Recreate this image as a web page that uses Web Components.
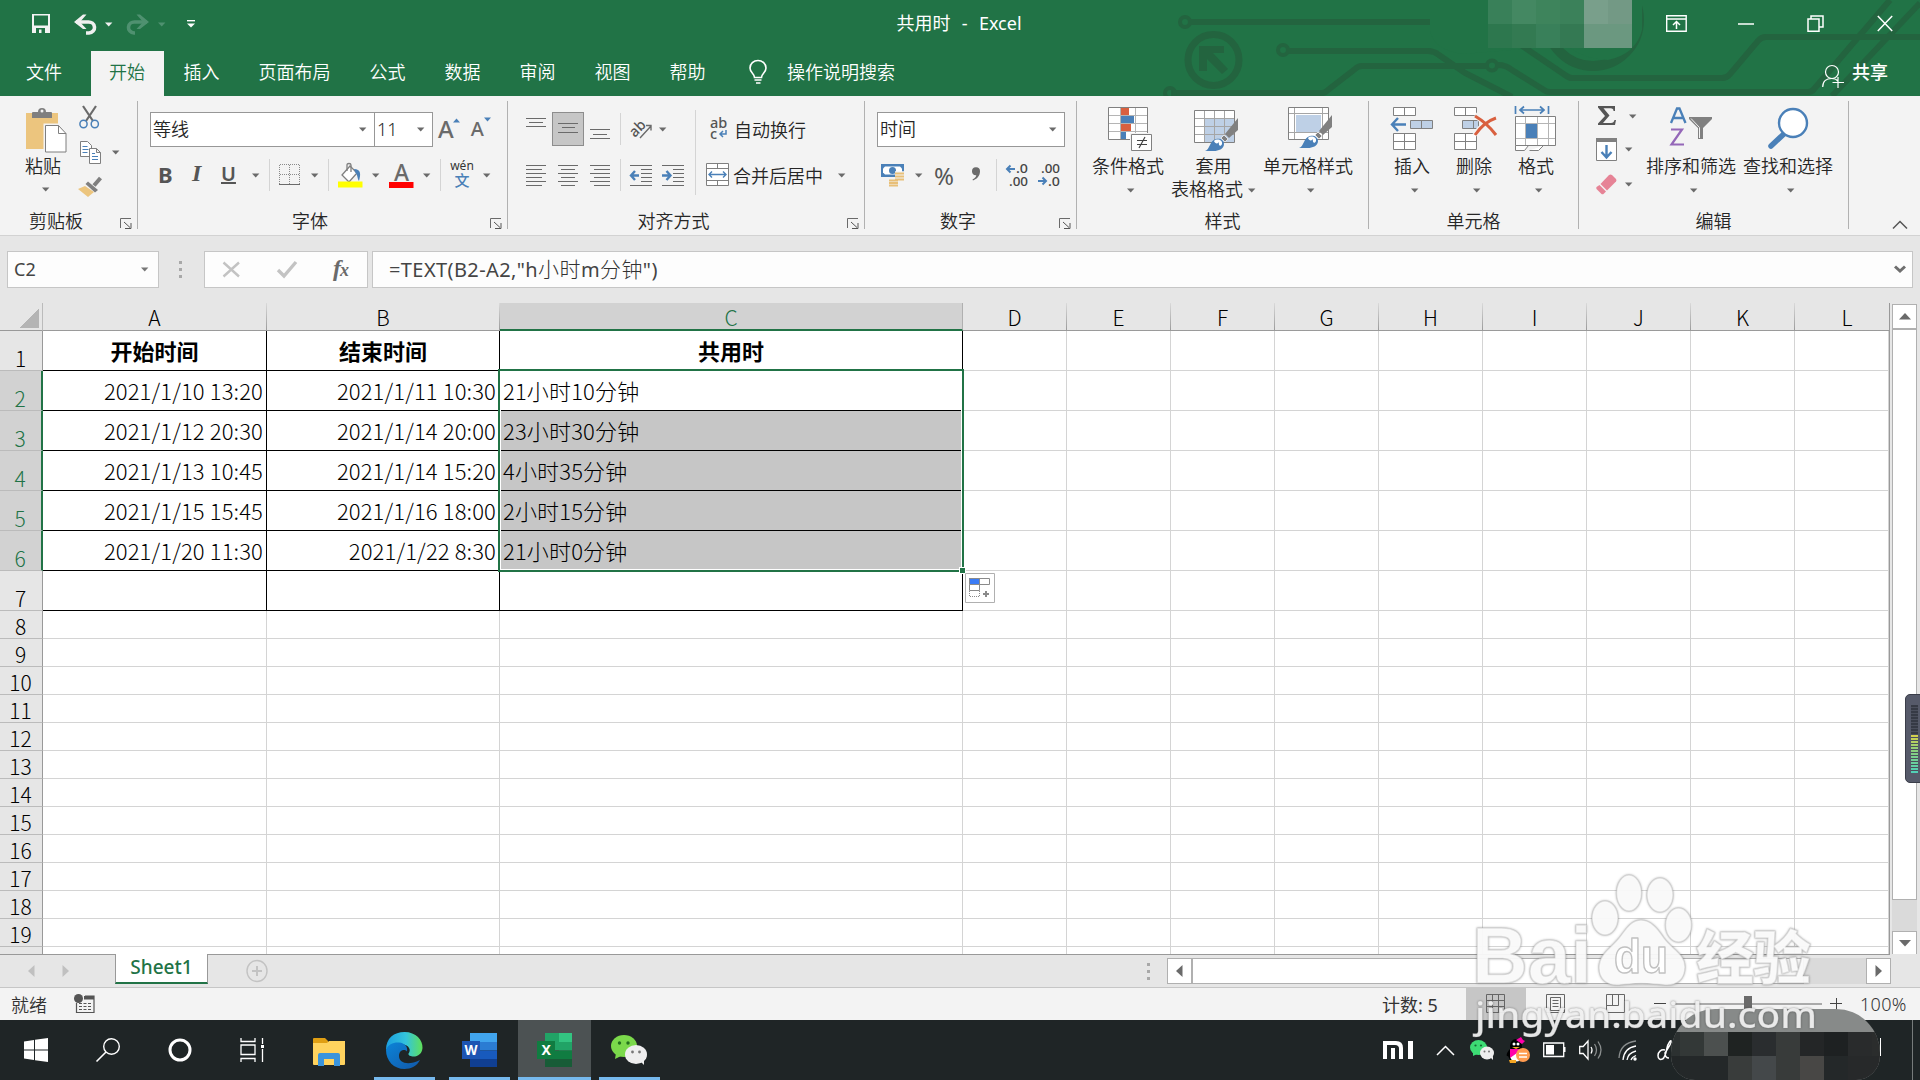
<!DOCTYPE html>
<html lang="zh-CN">
<head>
<meta charset="utf-8">
<title>共用时 - Excel</title>
<style>
    html, body {
        margin: 0;
        width: 1920px;
        height: 1080px;
        overflow: hidden;
        background: #e6e6e6;
        font-family: "Noto Sans", "Noto Sans CJK SC", sans-serif;
        font-size: 18px;
        font-weight: 350;
        color: #262626;
    }
</style>
</head>
<body>
<excel-window></excel-window>

<script>
// small drawings, [width, height, svg content]
const G = '#6a6a6a', B = '#4a80b8', R = '#d9603f', L = '#bed0e6'
const lines = (list, c = G) => list.map(([x1, x2, y]) => `<path d="M${x1} ${y}.5H${x2}" stroke="${c}"/>`).join('')
const brush = `<path d="M44 9V21L35 29 31 25Z" fill="#808080"/><path d="M30 26l4 4-3 3-4-4z" fill="#808080" stroke="#f3f3f3" stroke-width=".8"/>
    <path d="M11 42C16 41 15 32 22 30c4-1 8 1 8 5 0 5-6 7-10 7z" fill="${B}"/><path d="M20 32c3-3 9-1 8 3-1 3-4 2-3-2-1 2-4 2-5-1z" fill="#fff"/>`
const ICONS = {
    caret: [8, 5, '<path d="M0 .5H7.4L3.7 4.5Z" fill="currentColor"/>'],
    save: [20, 20, '<path d="M1 0h18v19H1z" fill="#f3f3f3"/><path d="M3 1.500h14v10H3z" fill="#217346"/><path d="M5 14h9v5H5z" fill="#217346"/><path d="M8 15.500h2.500V19H8z" fill="#f3f3f3"/>'],
    undo: [24, 21, '<path d="M2 8h12a6 5.500 0 0 1 1 11h-3" fill="none" stroke="currentColor" stroke-width="3.600"/><path d="M0 8 9 .5h3.500L6 8l6.500 7H9z" fill="currentColor"/>'],
    redo: [24, 21, '<path d="M22 8H10a6 5.500 0 0 0-1 11h1" fill="none" stroke="currentColor" stroke-width="3.600"/><path d="M24 8 15 .5h-3.500L18 8l-6.500 7H15z" fill="currentColor"/>'],
    more: [8, 8, '<path d="M0 .7h8" stroke="#fff" stroke-width="1.400"/><path d="M0 3.500h8L4 7.500z" fill="#fff"/>'],
    ribbonopt: [21, 17, '<path d="M.7.7h19.500v15.500H.7zM1 4h19" fill="none" stroke="#fff" stroke-width="1.400"/><path d="M10.500 14V7M7 10l3.500-3.500L14 10" fill="none" stroke="#fff" stroke-width="1.500"/>'],
    min: [16, 17, '<path d="M0 9h16" stroke="#fff" stroke-width="1.500"/>'],
    restore: [17, 17, '<path d="M1 4h11v12.200H1zM4 4V1h12v11h-3.500" fill="none" stroke="#fff" stroke-width="1.500"/>'],
    close: [16, 17, '<path d="M.8 1l14.400 15M15.200 1 .8 16" stroke="#fff" stroke-width="1.500"/>'],
    bulb: [18, 24, '<path d="M5.500 17.500c0-4-4.500-4.500-4.500-9.500a8 7.500 0 0 1 16 0c0 5-4.500 5.500-4.500 9.500zM5.500 20h7M7 23h4.500" fill="none" stroke="#fff" stroke-width="1.600"/>'],
    share: [22, 24, '<ellipse cx="10" cy="7" rx="6.500" ry="6.500" fill="none" stroke="#fff" stroke-width="1.200"/><path d="M.7 22c0-6 4-8.500 9-8.500 3 0 5 1 6 2.500M16 12v11M10.500 17.500H22" fill="none" stroke="#fff" stroke-width="1.200"/>'],
    paste: [42, 46, '<path d="M1 6h32v36H1z" fill="#ecc57e"/><path d="M7 11V6q0-1 1-1h5a4 4 0 0 1 8 0h5q1 0 1 1v5z" fill="#7f7f7f"/><circle cx="17" cy="4" r="1.500" fill="#f3f3f3"/><path d="M20 18h14l7.500 8v19H20z" fill="#fff" stroke="#f3f3f3" stroke-width="3"/><path d="M20.500 18.500h13l7.500 8v18.500H20.500zM33.500 18.500v8H41" fill="#fff" stroke="#7f7f7f"/>'],
    cut: [21, 23, `<path d="M4 0l10 15M17 0 7 15" stroke="#6a6a6a" stroke-width="2.200"/><ellipse cx="4.500" cy="18" rx="3.600" ry="3.800" fill="none" stroke="${B}" stroke-width="1.500"/><ellipse cx="15.800" cy="18" rx="3.600" ry="3.800" fill="none" stroke="${B}" stroke-width="1.500"/>`],
    copy: [21, 23, `<path d="M.5.5h7l4 4v11H.5z" fill="#fff" stroke="#7f7f7f"/><path d="M2.500 5.500h5M2.500 8.500h6M2.500 11.500h5" stroke="${B}"/><path d="M9.500 7.500h7l4 4v11h-11zM16.500 7.500v4h4" fill="#fff" stroke="#7f7f7f"/><path d="M12 12.500h3M12 15.500h6M12 18.500h6" stroke="${B}"/>`],
    painter: [24, 21, '<path d="M22.500 1 16 8.500" stroke="#7f7f7f" stroke-width="4"/><path d="M10 4.500 20 13l-3 2.500L7.500 7z" fill="#7f7f7f"/><path d="M7 9 0 12l10 8 6-5z" fill="#ecc57e"/>'],
    borders: [22, 22, '<path d="M.5 1v19M10.500 1v19M20.500 1v19M1 .5h20M1 10.500h20" stroke="#8a8a8a" stroke-dasharray="1 1"/><path d="M0 20.500h21" stroke="#6a6a6a"/>'],
    fill: [25, 25, `<path d="M12 3 4 12l7 7 8-9z" fill="#fff" stroke="#7f7f7f" stroke-width="1.300"/><path d="M9 8V2q0-1.500 2-1.500T13 2v7" fill="none" stroke="#7f7f7f" stroke-width="1.300"/><path d="M16 6c7 0 7 5 5 12-2-3-1-6-4-9z" fill="${B}"/><path d="M0 18.500h24.500v6H0z" fill="#ff0"/>`],
    fontred: [25, 6, '<path d="M0 0h24.500v6H0z" fill="red"/>'],
    up: [7, 5, `<path d="M0 4.500 3.500.5 7 4.500Z" fill="${B}"/>`],
    down: [7, 5, `<path d="M0 .5 3.500 4.500 7 .5Z" fill="${B}"/>`],
    launch: [12, 11, '<path d="M.5 10V.5H11" fill="none" stroke="#6a6a6a"/><path d="M4 4l6 5.500M11 5v5.500H5" fill="none" stroke="#555"/>'],
    top: [20, 34, lines([[0, 20, 6], [3, 17, 10], [0, 20, 14]])],
    mid: [20, 34, lines([[0, 20, 11], [4, 17, 15], [0, 20, 20]])],
    bot: [20, 34, lines([[0, 20, 17], [3, 17, 22], [0, 20, 26]])],
    left: [20, 23, lines([[0, 20, 1], [0, 16, 5], [0, 20, 9], [0, 16, 13], [0, 20, 17], [0, 16, 21]])],
    center: [20, 23, lines([[0, 20, 1], [3, 17, 5], [0, 20, 9], [3, 17, 13], [0, 20, 17], [3, 17, 21]])],
    right: [20, 23, lines([[0, 20, 1], [4, 20, 5], [0, 20, 9], [4, 20, 13], [0, 20, 17], [4, 20, 21]])],
    outdent: [23, 23, lines([[0, 22, 1], [11, 22, 5], [11, 22, 9], [11, 22, 13], [11, 22, 17], [0, 22, 21]]) + `<path d="M1 11.500h8M5 7l-4 4.500L5 16" fill="none" stroke="${B}" stroke-width="2.400"/>`],
    indent: [23, 23, lines([[0, 22, 1], [11, 22, 5], [11, 22, 9], [11, 22, 13], [11, 22, 17], [0, 22, 21]]) + `<path d="M0 11.500h8M4.500 7l4 4.500-4 4.500" fill="none" stroke="${B}" stroke-width="2.400"/>`],
    orient: [22, 20, '<text x="-2" y="13" transform="rotate(-45 8 9)" font-size="14.500" font-weight="500" fill="#555" font-family="Noto Sans">ab</text><path d="M9 19 20 7M15 6.500h5v5" fill="none" stroke="#6a6a6a" stroke-width="1.400"/>'],
    wrap: [18, 22, `<text x="0" y="9.500" font-size="14.500" font-weight="500" fill="#555" font-family="Noto Sans">ab</text><text x="0" y="21" font-size="14.500" font-weight="500" fill="#555" font-family="Noto Sans">c</text><path d="M16 12v4h-5M13 13l-3 3 3 3" fill="none" stroke="${B}" stroke-width="1.500"/>`],
    merge: [24, 24, `<path d="M.5.5h22v22H.5zM.5 5.500h22M.5 17.500h22M11.500.5v5M11.500 17.500v5" fill="#fff" stroke="#7f7f7f"/><path d="M3 11.500h17M6 8.500l-3 3 3 3M17 8.500l3 3-3 3" fill="none" stroke="${B}" stroke-width="1.400"/>`],
    money: [24, 23, `<path d="M0 0h23v13H0z" fill="${B}"/><path d="M4 2.500h15l2 2v4l-2 2H4l-2-2v-4z" fill="#fff"/><ellipse cx="11.500" cy="6.500" rx="3.500" ry="3.500" fill="${B}"/>
        <path d="M14 9h9M14 12h9M14 15h9M9 16h8M8 18.500h9M9 21.500h8" stroke="#f3f3f3" stroke-width="3.500"/><path d="M14 9.500h9M14 12.500h9M14 15.500h9M8 16.500h9M8 19h9M8 21.500h9" stroke="#e8bf78" stroke-width="2"/>`],
    comma: [10, 14, '<path d="M1 4.500a4 4 0 0 1 8-.5c0 5-3 8-7 9.500l-.5-1C4 11 5 10 5.300 8.200 3 8.500 1 7 1 4.500z" fill="#6a6a6a"/>'],
    decinc: [23, 24, `<path d="M1 6h8M4.500 2.500 1 6l3.500 3.500" fill="none" stroke="${B}" stroke-width="2"/><text x="10" y="10" font-size="12.500" font-weight="500" fill="#444" font-family="Noto Sans" textLength="12" lengthAdjust="spacingAndGlyphs">.0</text><text x="3" y="23" font-size="12.500" font-weight="500" fill="#444" font-family="Noto Sans" textLength="19" lengthAdjust="spacingAndGlyphs">.00</text>`],
    decdec: [23, 24, `<path d="M0 18h8M4.500 14.500 8 18l-3.500 3.500" fill="none" stroke="${B}" stroke-width="2"/><text x="3" y="10" font-size="12.500" font-weight="500" fill="#444" font-family="Noto Sans" textLength="19" lengthAdjust="spacingAndGlyphs">.00</text><text x="10" y="23" font-size="12.500" font-weight="500" fill="#444" font-family="Noto Sans" textLength="12" lengthAdjust="spacingAndGlyphs">.0</text>`],
    cond: [44, 46, `<path d="M.5 1.500h39v32H.5z" fill="#fff" stroke="#808080"/><path d="M1 9.500h38M1 17.500h38M1 25.500h38M12.500 2v31M27.500 2v31" stroke="#b5b5b5"/>
        <path d="M13 2h8v7h-8zM13 18h10v7H13z" fill="${R}"/><path d="M13 10h13v7H13zM13 26h5v7h-5z" fill="${B}"/><path d="M23.500 28.500h20v16h-20z" fill="#fff" stroke="#f3f3f3" stroke-width="3"/><path d="M23.500 28.500h20v16h-20z" fill="#fff" stroke="#808080"/><path d="M29 34.500h10M29 38.500h10M37 31l-6 11" stroke="#444" stroke-width="1.200"/>`],
    table: [44, 46, `<g transform="translate(0 3)"><path d="M.5 1.500h40v32H.5z" fill="#fff" stroke="#808080"/><path d="M10 10h30v23H10z" fill="${L}"/><path d="M1 9.500h39M1 17.500h39M1 25.500h39M10.500 2v31M20.500 2v31M30.500 2v31" stroke="#a5a5a5"/>${brush}</g>`],
    style: [44, 46, `<path d="M.5 1.500h40v32H.5z" fill="#fff" stroke="#808080"/><path d="M1 7.500h39M1 26.500h39M6.500 2v31M34.500 2v31" stroke="#a5a5a5"/><path d="M8 9h25v17H8z" fill="${L}"/>${brush}`],
    insert: [44, 46, `<path d="M3.500 1.500h22v8h-22zM14.500 1.500v8M3.500 27.500h22v16h-22zM14.500 27.500v16M3.500 35.500h22" fill="#fff" stroke="#808080"/><path d="M20.500 14.500h22v8h-22zM31.500 14.500v8" fill="${L}" stroke="#808080"/><path d="M16 18.500H2M8 12l-6 6.500L8 25" fill="none" stroke="${B}" stroke-width="2.400"/>`],
    remove: [44, 46, `<path d="M.5 1.500h22v8H.5zM11.500 1.500v8M.5 27.500h22v16H.5zM11.500 27.500v16M.5 35.500h22" fill="#fff" stroke="#808080"/><path d="M8.500 14.500h16v8h-16zM19.500 14.500v8" fill="${L}" stroke="#808080"/><path d="M21 9q12 8 21 20M42 12Q30 16 21 29" fill="none" stroke="#f3f3f3" stroke-width="6"/><path d="M21 10q12 7 21 19M42 12Q30 16 21 29" fill="none" stroke="${R}" stroke-width="3"/>`],
    format: [44, 46, `<path d="M1.500 0v8M34.500 0v8M6 4h24M10 .5 6 4l4 3.500M26 .5 30 4l-4 3.500" fill="none" stroke="${B}" stroke-width="1.700"/><path d="M1.500 10.500h40v29h-40zM1.500 39.500v5h9l4-5M15.500 44.500h9l5-5" fill="#fff" stroke="#808080"/><path d="M2 17.500h39M2 32.500h39M11.500 11v28M23.500 11v28M34.500 11v28" stroke="#b5b5b5"/><path d="M12 18h11v14H12z" fill="${B}"/>`],
    sigma: [18, 20, '<path d="M0 0h17v5h-1.500c0-2-1-2.800-3-2.800H5.500l6 7.300-6.500 7.500h8c2 0 3-1 3.500-3H18L17 19H0v-1.500L7 10 0 1.500z" fill="#555"/>'],
    filldown: [21, 23, `<path d="M.5.5h20v22H.5z" fill="#fff" stroke="#808080"/><path d="M0 0h21v4H0z" fill="#808080"/><path d="M10.500 7v12M5.500 14l5 5.500 5-5.500" fill="none" stroke="${B}" stroke-width="2.400"/>`],
    eraser: [21, 21, '<path d="M13 1q1.500-1 3 0l4 4q1 1 0 2.500l-9 9L4.500 10z" fill="#e68396"/><path d="M3.500 11 10 17.500 7.500 20q-1 .5-2 0L.5 15q-.5-1 0-2z" fill="#e68396"/>'],
    sort: [44, 46, `<path d="M2 17 8 2.500h2.500L16.500 17M4.500 12h9.500" fill="none" stroke="${B}" stroke-width="2.300"/><path d="M2 23.500h11L2.500 38.500H15" fill="none" stroke="#9467b8" stroke-width="2.200"/><path d="M20 11h23v2L34 22v11h-5V22l-9-9z" fill="#808080"/><path d="M22 12.500l8.500 9V32" stroke="#f3f3f3" fill="none"/>`],
    find: [44, 46, `<path d="M20 26 5 40" stroke="${B}" stroke-width="5.500" stroke-linecap="round"/><circle cx="27" cy="17" r="14" fill="#fff" stroke="${B}" stroke-width="2.400"/>`],
    collapse: [16, 10, '<path d="M1 8.500 8 1.500 15 8.500" fill="none" stroke="#555" stroke-width="1.500"/>'],
    chev: [12, 9, '<path d="M1 1.500 6 6 11 1.500" fill="none" stroke="#6f6f6f" stroke-width="3"/>'],
    dots: [4, 18, '<path d="M0 0h3v3H0zM0 7h3v3H0zM0 14h3v3H0z" fill="#a8a8a8"/>'],
    cancel: [19, 17, '<path d="M1.500 1.500 17 15.500M17 1.500 1.500 15.500" stroke="#c3c3c3" stroke-width="2.400"/>'],
    accept: [20, 17, '<path d="M1 9l6 6L19 1" fill="none" stroke="#c3c3c3" stroke-width="3.400"/>'],
    prev: [7, 12, '<path d="M6.500 0v12L0 6z" fill="currentColor"/>'],
    next: [7, 12, '<path d="M.5 0v12L7 6z" fill="currentColor"/>'],
    plus: [22, 24, '<ellipse cx="11" cy="12" rx="10" ry="10.500" fill="none" stroke="#c3c3c3" stroke-width="1.400"/><path d="M6 12h10M11 7v10" stroke="#c3c3c3" stroke-width="2"/>'],
    tri: [12, 7, '<path d="M0 6.500h12L6 0z" fill="#6a6a6a"/>'],
    trid: [12, 7, '<path d="M0 0h12L6 6.500z" fill="#6a6a6a"/>'],
    autofill: [30, 30, '<path d="M.5.5h29v29H.5z" fill="#fff" stroke="#b0b0b0"/><path d="M4 5h11v6H4z" fill="#3b7cf5"/><path d="M4.500 5.500h20v6h-20zM14.500 5.500v6M4.500 11.500v6h10v-6" fill="none" stroke="#8a8a8a"/><path d="M4.500 18v5.500h10V18" fill="none" stroke="#8a8a8a" stroke-dasharray="1 1"/><path d="M18 21h6M21 18v6" stroke="#8a8a8a" stroke-width="2"/>'],
    macro: [21, 20, '<path d="M2.500 9v9.500h17.500V2H11" fill="none" stroke="#555" stroke-width="1.200"/><path d="M10 2h10v3.500H10z" fill="#555"/><circle cx="4.500" cy="4.500" r="4.500" fill="#555"/><path d="M5 9.500h13M5 12.500h13M5 15.500h13" stroke="#555" stroke-dasharray="3 1.500"/>'],
    vnormal: [20, 20, '<path d="M.5.500h18v18H.5zM.5 6.500h18M.5 12.500h18M6.500.5v18M12.500.5v18" fill="none" stroke="#666"/>'],
    vlayout: [20, 20, '<path d="M.5.500h18v18H.5zM4.500 3.500h10v13h-10zM6.500 6.500h6M6.500 9.500h6M6.500 12.500h6" fill="none" stroke="#666"/>'],
    vbreak: [20, 20, '<path d="M.5.500h18v18H.5zM.5 11.500h12V.5M6.500.5v11" fill="none" stroke="#666"/>'],
    windows: [24, 24, '<path d="M0 3.500 10 2v9.500H0zM11 1.800 24 0v11.500H11zM0 12.500h10V22L0 20.500zM11 12.500h13V24L11 22.200z" fill="#fff"/>'],
    search: [24, 24, '<ellipse cx="15.500" cy="8.500" rx="7.800" ry="7.800" fill="none" stroke="#fff" stroke-width="1.400"/><path d="M10 14 .5 23.500" stroke="#fff" stroke-width="1.600"/>'],
    cortana: [24, 24, '<circle cx="12" cy="12" r="10" fill="none" stroke="#fff" stroke-width="3"/>'],
    tasks: [24, 24, '<path d="M1 0v3.500h14V0M1 7h14v9.500H1zM1 24v-3.500h14V24M22.500 0v6M22.500 11v13" fill="none" stroke="#fff" stroke-width="1.300"/><path d="M21 7h3v3h-3z" fill="#fff"/>'],
    folder: [34, 28, '<path d="M1 1q0-1 1-1h11l3 3v3H1z" fill="#e09f13"/><path d="M1 5h14l2-2h16v23q0 1-1 1H2q-1 0-1-1z" fill="#ffd35e"/><path d="M6 28V17q0-2 2-2h18q2 0 2 2v11h-6v-7H12v7z" fill="#3a94dc"/>'],
    edge: [37, 37, `<defs><linearGradient id="e1" x1="0" y1="0" x2="1" y2="0"><stop offset="0" stop-color="#1b9fe0"/><stop offset=".55" stop-color="#34c4dc"/><stop offset="1" stop-color="#5fe05a"/></linearGradient><linearGradient id="e2" x1="0" y1="0" x2="1" y2="1"><stop offset="0" stop-color="#0b84d8"/><stop offset="1" stop-color="#1258a8"/></linearGradient></defs>
        <path d="M0 18C0 6 8 0 18.500 0 30 0 37 8 36.500 16c-.5 6-5 9-10 8.500-3-.5-4.500-1.500-4-3 3-3 .5-9-6-9C10 12 4 13 0 18z" fill="url(#e1)"/><path d="M0 18c2-6 8-8 13-7.500 6 .5 9 4.500 8 9-3-3-8-1-8 4.500 0 7 9 10 21 4-3 6-9 9-15.500 9C8 37 0 29 0 18z" fill="url(#e2)"/>`],
    word: [35, 34, '<path d="M8 0h27v9H8z" fill="#41a5ee"/><path d="M8 9h27v8.500H8z" fill="#2b7cd3"/><path d="M8 17.500h27V26H8z" fill="#185abd"/><path d="M8 26h27v8H8z" fill="#103f91"/><path d="M0 8h18v18H0z" fill="#1d55b3"/><text x="2.500" y="22" font-size="14" font-weight="bold" font-family="Noto Sans" fill="#fff" textLength="13" lengthAdjust="spacingAndGlyphs">W</text>'],
    excel: [35, 34, '<path d="M8 0h27v9H8z" fill="#33c481"/><path d="M8 0h14v17H8z" fill="#21a366"/><path d="M22 9h13v8.500H22z" fill="#21a366"/><path d="M8 17.500h27V26H8z" fill="#107c41"/><path d="M8 26h27v8H8z" fill="#185c37"/><path d="M0 8h18v18H0z" fill="#107c41"/><text x="4.500" y="22" font-size="14" font-weight="bold" font-family="Noto Sans" fill="#fff">X</text>'],
    wechat: [36, 30, '<ellipse cx="13" cy="11" rx="13" ry="11" fill="#7bd94b"/><path d="M5 18l-1 6 6-3z" fill="#7bd94b"/><ellipse cx="25" cy="19.500" rx="11" ry="9.500" fill="#eee"/><path d="M29 26l4 4v-6z" fill="#eee"/><circle cx="8.500" cy="8" r="1.700" fill="#23701d"/><circle cx="17" cy="8" r="1.700" fill="#23701d"/><circle cx="21.500" cy="17" r="1.400" fill="#777"/><circle cx="28.500" cy="17" r="1.400" fill="#777"/>'],
    chat: [24, 20, '<ellipse cx="8.500" cy="7.500" rx="8.500" ry="7.500" fill="#3ddc74"/><path d="M3 12v4l4-2z" fill="#3ddc74"/><ellipse cx="17" cy="13" rx="7" ry="6.500" fill="#eee"/><path d="M20 17l3 3v-4z" fill="#eee"/><circle cx="5.500" cy="5.500" r="1.100" fill="#146b33"/><circle cx="11" cy="5.500" r="1.100" fill="#146b33"/><circle cx="14.500" cy="11.500" r="1" fill="#777"/><circle cx="19" cy="11.500" r="1" fill="#777"/>'],
    mi: [30, 18, '<path d="M0 0h13q7 0 7 7v11h-4V7.500Q16 4 12 4H4v14H0zM8 7h4v11H8zM25 0h5v18h-5z" fill="#fff"/>'],
    arrow: [19, 11, '<path d="M1 10 9.500 1.500 18 10" fill="none" stroke="#fff" stroke-width="1.500"/>'],
    qq: [24, 26, '<ellipse cx="10" cy="9" rx="6" ry="7" fill="#000"/><path d="M4 12C0 16 0 20 2 19l2 4h13l2-9z" fill="#000"/><ellipse cx="10" cy="19" rx="6" ry="5.500" fill="#fff"/><path d="M4 12h13v5l-6-1-7 5z" fill="#f0a"/><path d="M10 3l5-3 2 3 2 1-3 3-3-2z" fill="#f0a"/><circle cx="8" cy="7" r="1.500" fill="#fff"/><circle cx="12" cy="7" r="1.500" fill="#fff"/><path d="M6 10h8l-4 2zM3 23h7v3H4z" fill="#f5a623"/><circle cx="17" cy="18" r="7" fill="#ff9c50"/><path d="M13 16.500h8M13 20h8" stroke="#fff" stroke-width="1.500"/>'],
    battery: [23, 16, '<path d="M.7 1h20v13.500H.7z" fill="none" stroke="#fff" stroke-width="1.300"/><path d="M3 3h8v9.500H3zM21 5h1.500v5H21z" fill="#fff"/>'],
    volume: [24, 20, '<path d="M.7 6.500h3.500L9 1v18l-4.800-5.500H.7z" fill="none" stroke="#fff" stroke-width="1.300"/><path d="M12 7q2 3 0 6.500" fill="none" stroke="#fff" stroke-width="1.300"/><path d="M15.500 4q4 6 0 12M19 1.500q6 8.500 0 17" fill="none" stroke="#8a8e8e" stroke-width="1.300"/>'],
    wifi: [20, 21, '<path d="M1 18Q2 3 18 1" fill="none" stroke="#8a8e8e" stroke-width="1.300"/><path d="M5 20Q6 8 18 6M9 20q1-7 9-9M13 20q1-3 5-4.500" fill="none" stroke="#fff" stroke-width="1.300"/><circle cx="17" cy="19" r="1.700" fill="#fff"/>'],
    pen: [15, 20, '<path d="M8 10C4 9 1 12 1 15.500S3 20 5.500 19 9 13 10 8c1-5 4-8 4-7 1 1-2 6-6 12q0 5 4 5" fill="none" stroke="#fff" stroke-width="1.500"/>'],
}

// every part renders its own template into an open shadow root
class Part extends HTMLElement {
    constructor() {
        super();
        this._shadowRoot = this.attachShadow({mode: "open"})
    }
    connectedCallback() {
        this._shadowRoot.innerHTML = this.render()
    }
}

class uiIcon extends Part {
    render() {
        const [w, h, body] = ICONS[this.getAttribute("name")]
        return `<style>:host { display: block; flex: none; width: ${w}px; height: ${h}px; } svg { display: block; overflow: visible; }</style>
            <svg width="${w}" height="${h}" viewBox="0 0 ${w} ${h}">${body}</svg>`
    }
}

class titleBar extends Part {
    render() {
        const mosaic = [['#398059', '#448862', '#3e845c', '#3b815a', '#799f8b', '#739985'], ['#2d774e', '#337a52', '#39805a', '#347953', '#6b9880', '#6b9880']]
        return `<style>
                :host { display: grid; grid-template-columns: 1fr auto 1fr; height: 51px; position: relative; color: #fff; align-items: center; }
                .decor { position: absolute; left: 1140px; top: 0; }
                .quick { display: flex; align-items: center; padding: 0 0 3px 31px; color: #f0f0f0; }
                .dim { color: #4f9170; }
                .name { white-space: pre; font-size: 18px; line-height: 24px; padding: 0 2px 6px 0; word-spacing: 1px; position: relative; font-weight: 400; }
                .win { display: flex; justify-content: flex-end; padding-bottom: 5px; position: relative; }
                .win span { width: 69.500px; display: flex; justify-content: center; }
            </style>
            <svg class="decor" width="780" height="96" fill="none" stroke="#23643f" stroke-width="6">
                <circle cx="45" cy="22" r="5" stroke-width="4"/><path d="M51 22H291"/>
                <ellipse cx="73.500" cy="60" rx="25.500" ry="25.500" stroke-width="7"/><path d="M59 46h25v7h-11l15 16-6 5-15-15v12h-8z" fill="#23643f" stroke="none"/>
                <circle cx="143" cy="50" r="5" stroke-width="4"/><path d="M149 51H288q6 0 11 4L325 73 372 97"/>
                <circle cx="352" cy="65.500" r="5" stroke-width="4"/><path d="M346 66H222q-4 0-7 3L188 90q-3 3-6 3H31"/><circle cx="30" cy="93" r="5" stroke-width="4"/>
                <path d="M358 65q8 0 14 5l32 20q3 2 6 2H668q4 0 6-3L750 0"/>
                <path d="M692 96 780 3"/>
                <circle cx="453" cy="20" r="46" stroke-width="10"/>
                <path d="M290 0h212v30q-6 24-34 30-20 0-40-13l-18-4-27 6-60 5q-30-4-33-24z" fill="#217346" stroke="none"/>
                <path d="M381 45l44 30q4 3 7 3H582q5 0 8-4l28-33q3-4 8-4H780"/>
                <g stroke="none">${mosaic.map((r, j) => r.map((c, i) => `<path d="M${348 + i * 24} ${j * 24}h24v24h-24z" fill="${c}"/>`).join('')).join('')}</g>
            </svg>
            <div class="quick">
                <ui-icon name="save"></ui-icon>
                <ui-icon name="undo" style="margin-left:23px"></ui-icon><ui-icon name="caret" style="margin-left:7px"></ui-icon>
                <ui-icon name="redo" class="dim" style="margin-left:12px"></ui-icon><ui-icon name="caret" class="dim" style="margin-left:9px"></ui-icon>
                <ui-icon name="more" style="margin-left:21px"></ui-icon>
            </div>
            <div class="name">共用时  -  Excel</div>
            <div class="win"><span><ui-icon name="ribbonopt"></ui-icon></span><span><ui-icon name="min"></ui-icon></span><span><ui-icon name="restore"></ui-icon></span><span><ui-icon name="close"></ui-icon></span></div>`
    }
}

class ribbonTabs extends Part {
    render() {
        return `<style>
                :host { display: flex; height: 45px; color: #fff; line-height: 43px; font-size: 18px; position: relative; }
                .tab { padding: 0 19.500px; }
                .file { padding: 0 27px 0 26px; width: 36px; }
                .active { background: #f3f3f3; color: #217346; padding: 0 18.500px 0 18px; margin: 0 0.500px 0 2px; }
                ui-icon { margin: 9px 20px 0 29px; }
                .share { margin-left: auto; display: flex; font-weight: 500; padding-right: 32px; }
                .share ui-icon { margin: 14px 8px 0 0; }
            </style>
            <span class="file">文件</span><span class="tab active">开始</span>
            ${['插入', '页面布局', '公式', '数据', '审阅', '视图', '帮助'].map(t => `<span class="tab">${t}</span>`).join('')}
            <ui-icon name="bulb" style="margin-left:24px"></ui-icon><span>操作说明搜索</span>
            <div class="share"><ui-icon name="share"></ui-icon><span>共享</span></div>`
    }
}

class ribbonGroup extends Part {
    render() {
        return `<style>
                :host { display: flex; flex-direction: column; box-sizing: border-box; height: 128px; margin-top: 5px; border-right: 1px solid #b1b1b1; width: ${this.getAttribute("width")}px; }
                .body { height: 110px; display: flex; flex: none; }
                .foot { display: flex; line-height: 20px; height: 20px; }
                .foot span { flex: 1; text-align: center; }
                ui-icon { margin: 7px 5px 0 8px; }
            </style>
            <div class="body"><slot></slot></div>
            <div class="foot"><span>${this.getAttribute("label")}</span>${this.hasAttribute("launch") ? '<ui-icon name="launch"></ui-icon>' : ''}</div>`
    }
}

class bigButton extends Part {
    render() {
        const second = this.getAttribute("second")
        return `<style>
                :host { display: flex; flex-direction: column; align-items: center; padding-top: 5px; line-height: 23px; color: #262626; white-space: nowrap; flex: none; }
                .pic { margin-left: ${this.getAttribute("nudge") || 0}px; }
                .label { margin-top: 3px; }
                .drop { display: flex; align-items: center; height: 24px; color: #6a6a6a; }
                .drop b { font-weight: inherit; color: #262626; margin-right: 5px; line-height: 22px; margin-bottom: 2px; }
            </style>
            <ui-icon class="pic" name="${this.getAttribute("icon")}"></ui-icon>
            <span class="label"><slot></slot></span>
            <span class="drop">${second ? `<b>${second}</b>` : ''}<ui-icon name="caret" style="${second ? '' : 'margin-left:6px'}"></ui-icon></span>`
    }
}

class ribbonBar extends Part {
    render() {
        const i = (name, left = 0, top = 0) => `<ui-icon name="${name}" style="margin-left:${left}px;margin-top:${top}px"></ui-icon>`
        return `<style>
                :host { display: flex; height: 139px; background: #f3f3f3; border-bottom: 1px solid #d2d2d2; color: #6a6a6a; }
                ribbon-group { color: #262626; flex: none; }
                ui-icon[name=caret] { color: #6a6a6a; }
                .col { display: flex; flex-direction: column; flex: none; }
                .row { display: flex; align-items: center; height: 46px; }
                .box { box-sizing: border-box; height: 35px; border: 1px solid #979797; background: #fff; display: flex; align-items: center; justify-content: space-between; padding: 0 7px 0 2px; line-height: 30px; }
                .sep { width: 1px; height: 32px; background: #d4d4d4; }
                .on { box-sizing: border-box; width: 32px; height: 34px; background: #c6c6c6; border: 1px solid #8d8d8d; padding: 0 5px; display: flex; align-items: center; }
                .g { color: #555; }
                .g > b, .g > i, .g > u { padding-bottom: 3px; }
                .a { display: flex; align-items: flex-start; color: #6a6a6a; line-height: 30px; font-weight: 500; }
                .a ui-icon { margin-top: 4px !important; }
                .red { display: flex; flex-direction: column; align-items: center; font-size: 23px; line-height: 20px; font-weight: 500; color: #6a6a6a; width: 25px; }
                .wen { width: 22px; display: flex; flex-direction: column; align-items: center; line-height: 12px; color: #333; font-size: 12px; font-weight: 400; padding-bottom: 3px; }
                .wen b { color: #4a80b8; font-weight: 500; font-size: 15px; line-height: 16px; }
                .end { margin-left: auto; display: flex; align-items: flex-end; padding: 0 12px 5px 0; }
            </style>
            <ribbon-group width="138" label="剪贴板" launch>
                <div class="col" style="margin-left:25px;padding-top:6px">
                    ${i('paste')}<span style="margin-top:2px;line-height:22px">粘贴</span>${i('caret', 17, 10)}
                </div>
                <div class="col" style="margin-left:12px;padding-top:5px">
                    ${i('cut', 0)}<div class="row" style="height:23px;margin-top:12px">${i('copy', 1)}${i('caret', 11)}</div>${i('painter', -1, 13)}
                </div>
            </ribbon-group>

            <ribbon-group width="370" label="字体" launch>
                <div class="col" style="margin-left:12px;padding-top:5px">
                    <div class="row">
                        <div class="box" style="width:225px">等线${i('caret')}</div><div class="box" style="width:59px;margin-left:-1px">11${i('caret')}</div>
                        <span class="a" style="margin-left:5px;font-size:24px">A${i('up', -1)}</span><span class="a" style="margin-left:11px;font-size:20px;line-height:32px">A${i('down')}</span>
                    </div>
                    <div class="row g">
                        <b style="margin-left:8px;width:15px;font-size:22px">B</b><i style="margin-left:19px;width:13px;font:italic bold 24px 'Liberation Serif'">I</i><u style="margin-left:16px;width:16px;font-size:20px;font-weight:600">U</u>${i('caret', 15)}
                        <span class="sep" style="margin-left:9px"></span>${i('borders', 9)}${i('caret', 10)}<span class="sep" style="margin-left:9px"></span>
                        ${i('fill', 9)}${i('caret', 9)}<span class="red" style="margin-left:9px">A${i('fontred')}</span>${i('caret', 9)}
                        <span class="sep" style="margin-left:9px"></span><span class="wen" style="margin-left:10px">wén<b>文</b></span>${i('caret', 10)}
                    </div>
                </div>
            </ribbon-group>

            <ribbon-group width="357" label="对齐方式" launch>
                <div class="col" style="margin-left:18px;padding-top:5px">
                    <div class="row">${i('top')}<span class="on" style="margin-left:6px">${i('mid')}</span>${i('bot', 6)}<span class="sep" style="margin-left:10px"></span>${i('orient', 10)}${i('caret', 6)}</div>
                    <div class="row">${i('left')}${i('center', 12)}${i('right', 12)}<span class="sep" style="margin-left:10px"></span>${i('outdent', 9)}${i('indent', 9)}</div>
                </div>
                <span class="sep" style="height:85px;margin:9px 0 0 10px"></span>
                <div class="col" style="margin-left:10px;padding-top:5px">
                    <div class="row">${i('wrap', 4)}<span style="margin-left:6px">自动换行</span></div>
                    <div class="row">${i('merge')}<span style="margin-left:3px">合并后居中</span>${i('caret', 15)}</div>
                </div>
            </ribbon-group>

            <ribbon-group width="212" label="数字" launch>
                <div class="col" style="margin-left:12px;padding-top:5px">
                    <div class="row"><div class="box" style="width:188px">时间${i('caret')}</div></div>
                    <div class="row g">${i('money', 4)}${i('caret', 10)}<span style="margin-left:11px;font-size:24px;width:21px;font-weight:400">%</span>${i('comma', 16, -2)}<span class="sep" style="margin-left:15px"></span>${i('decinc', 9)}${i('decdec', 9)}</div>
                </div>
            </ribbon-group>

            <ribbon-group width="292" label="样式">
                <big-button icon="cond" nudge="4" style="margin-left:15px">条件格式</big-button>
                <big-button icon="table" nudge="4" second="表格格式" style="margin-left:7px">套用</big-button>
                <big-button icon="style" nudge="3" style="margin-left:7px">单元格样式</big-button>
            </ribbon-group>

            <ribbon-group width="210" label="单元格">
                <big-button icon="insert" style="margin-left:21px">插入</big-button>
                <big-button icon="remove" nudge="4" style="margin-left:16px">删除</big-button>
                <big-button icon="format" style="margin-left:16px">格式</big-button>
            </ribbon-group>

            <ribbon-group width="270" label="编辑">
                <div class="col" style="margin-left:17px;padding-top:5px">
                    <div class="row" style="height:20px">${i('sigma', 2)}${i('caret', 13)}</div>
                    <div class="row" style="height:23px;margin-top:12px">${i('filldown')}${i('caret', 8)}</div>
                    <div class="row" style="height:21px;margin-top:13px">${i('eraser')}${i('caret', 8)}</div>
                </div>
                <big-button icon="sort" style="margin-left:9px">排序和筛选</big-button>
                <big-button icon="find" style="margin-left:7px">查找和选择</big-button>
            </ribbon-group>
            <div class="end">${i('collapse')}</div>`
    }
}

class formulaBar extends Part {
    render() {
        return `<style>
                :host { display: flex; align-items: flex-start; height: 52px; padding: 15px 7px 0; background: #e6e6e6; color: #444; font-weight: 400; }
                div { box-sizing: border-box; height: 37px; border: 1px solid #c6c6c6; background: #fdfdfd; display: flex; align-items: center; line-height: 34px; }
                .ref { width: 152px; padding: 0 9px 1px 6px; justify-content: space-between; color: #777; }
                .ref span { color: #444; }
                .tools { width: 164px; padding: 0 19px 0 17px; justify-content: space-between; margin: 0 4px 0 21px; }
                .tools i { font: italic bold 24px "Liberation Serif"; color: #6a6a6a; letter-spacing: -1px; padding-bottom: 2px; }
                .tools i small { font-size: 18px; }
                .text { flex: 1; padding: 0 6px 1px 16px; justify-content: space-between; }
                .text span { font-size: 20px; letter-spacing: 0.400px; }
                .text em { font-style: normal; font-weight: 300; font-size: 21px; color: #333; }
                .dots { margin: 10px 0 0 20px; }
            </style>
            <div class="ref"><span>C2</span><ui-icon name="caret"></ui-icon></div>
            <ui-icon class="dots" name="dots"></ui-icon>
            <div class="tools"><ui-icon name="cancel"></ui-icon><ui-icon name="accept"></ui-icon><i>f<small>x</small></i></div>
            <div class="text"><span>=TEXT(B2-A2,"h<em>小时</em>m<em>分钟</em>")</span><ui-icon name="chev"></ui-icon></div>`
    }
}

class sheetGrid extends Part {
    render() {
        const data = [
            ['开始时间', '结束时间', '共用时'],
            ['2021/1/10 13:20', '2021/1/11 10:30', '21小时10分钟'],
            ['2021/1/12 20:30', '2021/1/14 20:00', '23小时30分钟'],
            ['2021/1/13 10:45', '2021/1/14 15:20', '4小时35分钟'],
            ['2021/1/15 15:45', '2021/1/16 18:00', '2小时15分钟'],
            ['2021/1/20 11:30', '2021/1/22 8:30', '21小时0分钟'],
            ['', '', ''],
        ]
        let html = '<div class="corner"></div>' + [...'ABCDEFGHIJKL'].map(c => `<div class="head ${c === 'C' ? 'sel' : c === 'L' ? 'last' : ''}">${c}</div>`).join('')
        for (let r = 1; r <= 20; r++) {
            const picked = r > 1 && r < 7
            html += `<div class="num ${picked ? 'sel' : ''}">${r < 20 ? r : ''}</div>`
            for (let c = 0; c < 12; c++) {
                const cls = ['cell']
                if (r < 8 && c < 3) cls.push('b', r === 1 ? 'title' : c < 2 ? 'date' : 'text')
                if (c === 2 && r > 2 && r < 7) cls.push('grey')
                html += `<div class="${cls.join(' ')}">${(data[r - 1] || [])[c] || ''}</div>`
            }
        }
        return `<style>
                :host { display: flex; height: 651px; position: relative; background: #e6e6e6; font-family: "Noto Sans CJK SC", sans-serif; font-weight: 300; font-size: 22px; color: #000; }
                .grid { display: grid; width: 1890px; height: 651px; overflow: hidden; flex: none; box-sizing: border-box; border-right: 1px solid #999;
                    grid-template-columns: 43px 224px 233px 463px repeat(8, 104px) 94px; grid-template-rows: 28px repeat(7, 40px) repeat(13, 28px); }
                .grid div { box-sizing: border-box; white-space: nowrap; }
                .corner { background: linear-gradient(135deg, transparent 50%, #b4b4b4 50%) 20px 5px / 19px 20px no-repeat; border-bottom: 1px solid #999; border-right: 1px solid #bbb; }
                .head { text-align: center; line-height: 28px; border-bottom: 1px solid #999; border-right: 1px solid; border-image: linear-gradient(#dcdcdc, #999) 1; font-size: 21px; }
                .head.last { padding-left: 10px; border-right: 0; }
                .head.sel { background: #d2d2d2; border-bottom: 2px solid #217346; border-image: none; border-right-color: #b0b0b0; color: #217346; }
                .num { display: flex; align-items: flex-end; justify-content: center; line-height: 24px; border-right: 1px solid #999; border-bottom: 1px solid #bbb; font-size: 21px; padding-right: 1px; }
                .num.sel { background: #d2d2d2; color: #217346; border-right: 2px solid #217346; }
                .cell { background: #fff; border-right: 1px solid #d4d4d4; border-bottom: 1px solid #d4d4d4; line-height: 39px; }
                .b { border-color: #000; }
                .title { text-align: center; font-weight: 700; line-height: 38px; }
                .date { text-align: right; padding-right: 3px; letter-spacing: 0.130px; }
                .text { padding-left: 3px; letter-spacing: 0.150px; }
                .grey { background: #c6c6c6; }
                .range { position: absolute; left: 498px; top: 66px; width: 462px; height: 199px; border: 2px solid #217346; box-shadow: inset 0 0 0 1px #fff; }
                .range::after { content: ""; position: absolute; right: -4px; bottom: -4px; width: 5px; height: 5px; background: #217346; border: 1px solid #fff; }
                .fillmenu { position: absolute; left: 965px; top: 270px; }
                .bar { width: 25px; margin: 1px 3px 0 auto; display: flex; flex-direction: column; background: #dadada; height: 652px; }
                .bar div { box-sizing: border-box; border: 1px solid #b0b0b0; background: #fff; height: 25px; display: flex; align-items: center; justify-content: center; }
                .bar .thumb { height: 571px; margin-bottom: auto; }
            </style>
            <div class="grid">${html}</div>
            <div class="range"></div>
            <ui-icon class="fillmenu" name="autofill"></ui-icon>
            <div class="bar"><div><ui-icon name="tri"></ui-icon></div><div class="thumb"></div><div><ui-icon name="trid"></ui-icon></div></div>`
    }
}

class sheetTabs extends Part {
    render() {
        return `<style>
                :host { display: flex; box-sizing: border-box; height: 33px; background: #e6e6e6; position: relative; }
                .left { box-sizing: border-box; width: 1890px; border-top: 1px solid #999; display: flex; color: #c0c0c0; flex: none; }
                .tab { box-sizing: border-box; width: 93px; height: 30px; margin: -1px 38px 0 46px; background: #fff; border: 1px solid #999; border-top: 0; border-bottom: 2px solid #217346; color: #217346; font-size: 19px; font-weight: 500; text-align: center; line-height: 26px; }
                .scroll { margin: 3px -1px 0 16px; width: 724px; height: 26px; display: flex; background: #dadada; color: #6a6a6a; }
                .scroll div { box-sizing: border-box; border: 1px solid #b0b0b0; background: #fff; width: 25px; display: flex; align-items: center; justify-content: center; }
                .scroll .thumb { width: 612px; margin-right: auto; }
            </style>
            <div class="left">
                <ui-icon name="prev" style="margin:10px 0 0 28px"></ui-icon><ui-icon name="next" style="margin:10px 0 0 27px"></ui-icon>
                <div class="tab">Sheet1</div><ui-icon name="plus" style="margin-top:4px"></ui-icon>
                <ui-icon name="dots" style="margin:8px 0 0 auto"></ui-icon>
                <div class="scroll"><div><ui-icon name="prev"></ui-icon></div><div class="thumb"></div><div><ui-icon name="next"></ui-icon></div></div>
            </div>`
    }
}

class statusBar extends Part {
    render() {
        return `<style>
                :host { display: flex; align-items: center; box-sizing: border-box; height: 33px; border-top: 1px solid #c6c6c6; background: #f3f3f3; padding: 0 11px; color: #333; }
                .t { padding-bottom: 1px; }
                .view { width: 60px; height: 32px; display: flex; align-items: center; justify-content: center; }
                .view ui-icon { margin-right: 1px; }
                .on { background: #c6c6c6; }
                .track { width: 148px; height: 16px; margin: 0 8px; display: flex; justify-content: center; background: linear-gradient(#aaa, #aaa) 0 7px / 100% 2px no-repeat; }
                .track b { width: 8px; background: #6a6a6a; }
                .sign { width: 12px; height: 12px; background: linear-gradient(#444, #444) 0 5px / 12px 1px no-repeat; }
                .add { background: linear-gradient(#444, #444) 0 5px / 12px 1px no-repeat, linear-gradient(#444, #444) 6px 0 / 1px 12px no-repeat; }
            </style>
            <span class="t">就绪</span><ui-icon name="macro" style="margin-left:27px"></ui-icon>
            <span class="t" style="margin-left:auto;width:84px;font-weight:400">计数: 5</span>
            <span class="view on"><ui-icon name="vnormal"></ui-icon></span><span class="view"><ui-icon name="vlayout"></ui-icon></span><span class="view"><ui-icon name="vbreak"></ui-icon></span>
            <span class="sign" style="margin-left:8px"></span><span class="track"><b></b></span><span class="sign add"></span>
            <span class="t" style="width:49px;margin-left:18px;letter-spacing:0.300px">100%</span>`
    }
}

class taskBar extends Part {
    render() {
        const apps = [['folder', ''], ['edge', 'run'], ['word', 'run'], ['excel', 'run now'], ['wechat', 'run']]
        const tray = [['mi', 0], ['arrow', 23], ['chat', 15], ['qq', 12], ['battery', 13], ['volume', 13], ['wifi', 15], ['pen', 19]]
        return `<style>
                :host { display: flex; height: 60px; background: #1f2526; align-items: stretch; position: relative; }
                span { display: flex; align-items: center; justify-content: center; box-sizing: border-box; }
                .sys { width: 72px; }
                .app { width: 61px; margin: 0 7px; padding-top: 3px; }
                .run { border-bottom: 3px solid #76b9ed; }
                .app ui-icon { margin-right: 1px; }
                .now { width: 73px; margin: 0 1px; background: #4c5253; }
                .tray { margin-left: auto; margin-right: 248px; }
                .edge { position: absolute; left: 1912px; top: 0; width: 1px; height: 60px; background: #777b7b; }
                .bit { position: absolute; left: 1880px; top: 18px; width: 1px; height: 18px; background: #fff; }
            </style>
            ${['windows', 'search', 'cortana', 'tasks'].map(n => `<span class="sys"><ui-icon name="${n}"></ui-icon></span>`).join('')}
            <div style="width:4px"></div>
            ${apps.map(([n, c]) => `<span class="app ${c}"><ui-icon name="${n}"></ui-icon></span>`).join('')}
            <span class="tray">${tray.map(([n, m]) => `<ui-icon name="${n}" style="margin-left:${m}px"></ui-icon>`).join('')}</span>
            <div class="bit"></div>
            <div class="edge"></div>`
    }
}

// blocks over the clock area
class mosaicPatch extends Part {
    render() {
        const rows = [['#2c3131', '#333837', '#4c504f', '#1f2322', '#2a2d2f', '#383b3a', '#242627', '#1e2122', '#292b2c', '#2b2d2d'],
            ['#222627', '#242829', '#242829', '#393c3b', '#44484a', '#383b3a', '#484745', '#242829', '#27292a', '#27292a']]
        return `<style>
                :host { position: absolute; left: 1671px; top: 1009px; width: 209px; height: 71px; overflow: hidden; border-radius: 44px 44px 24px 24px; background: #878a89; }
                div { display: flex; height: 24px; }
                div:first-of-type { margin-top: 23px; }
                i { width: 24px; flex: none; }
                i:first-child { width: 9px; }
            </style>${rows.map(r => `<div>${r.map(c => `<i style="background:${c}"></i>`).join('')}</div>`).join('')}`
    }
}

class waterMark extends Part {
    render() {
        return `<style>
                :host { position: absolute; left: 1460px; top: 860px; width: 370px; height: 200px; }
                svg { display: block; overflow: visible; filter: drop-shadow(0 0 1px rgba(0, 0, 0, 0.350)); }
            </style>
            <svg width="370" height="200" fill="#fff" fill-opacity=".93" stroke="#bbb" stroke-opacity=".4" stroke-width="1.500" stroke-linejoin="round" font-weight="bold">
                <ellipse cx="169" cy="33" rx="12.500" ry="18"/><ellipse cx="200" cy="35" rx="13" ry="17"/><ellipse cx="145" cy="58" rx="13" ry="17"/><ellipse cx="218.500" cy="65" rx="13" ry="17"/>
                <path d="M181 60c10 0 17 9 23 18 9 12 21 16 21 29 0 12-8 19-20 18-16-2-32-2-46 0-12 1-20-6-20-17 0-14 12-20 20-30 7-9 12-18 22-18z"/>
                <text x="12" y="123" font-family="Liberation Sans" font-size="80" textLength="120" lengthAdjust="spacingAndGlyphs">Bai</text>
                <text x="154" y="113" font-family="Liberation Sans" font-size="49" stroke="#999" stroke-opacity=".6" textLength="54" lengthAdjust="spacingAndGlyphs">du</text>
                <text x="236" y="119" font-family="Noto Sans CJK SC" font-size="58" font-weight="900" textLength="115">经验</text>
                <text x="15" y="168" font-family="Noto Sans" font-size="36" font-weight="500" stroke-width=".6" textLength="342" lengthAdjust="spacingAndGlyphs" fill="#f4f4f4">jingyan.baidu.com</text>
            </svg>`
    }
}

class levelMeter extends Part {
    render() {
        return `<style>
                :host { position: absolute; box-sizing: border-box; left: 1905px; top: 694px; width: 16px; height: 89px; background: #565a6a; border: 1px solid #3a3d49; border-radius: 5px 0 0 5px; padding: 10px 0 0 5px; }
                div { width: 7px; height: 68px; background: repeating-linear-gradient(transparent 0 2px, #4b4f5c 2px 3px), linear-gradient(#363a45 0 44%, #d8d04a 44%, #8fd07a 65%, #4fd0b8); }
            </style><div></div>`
    }
}

class excelWindow extends Part {
    render() {
        return `<style>
                :host { display: flex; flex-direction: column; width: 1920px; height: 1080px; overflow: hidden; position: relative; }
                .green { background: #217346; flex: none; }
                ribbon-bar, formula-bar, sheet-grid, sheet-tabs, status-bar, task-bar { flex: none; }
            </style>
            <div class="green"><title-bar></title-bar><ribbon-tabs></ribbon-tabs></div>
            <ribbon-bar></ribbon-bar>
            <formula-bar></formula-bar>
            <sheet-grid></sheet-grid>
            <sheet-tabs></sheet-tabs>
            <status-bar></status-bar>
            <task-bar></task-bar>
            <mosaic-patch></mosaic-patch>
            <water-mark></water-mark>
            <level-meter></level-meter>`
    }
}

window.customElements.define('ui-icon', uiIcon)
window.customElements.define('title-bar', titleBar)
window.customElements.define('ribbon-tabs', ribbonTabs)
window.customElements.define('ribbon-group', ribbonGroup)
window.customElements.define('big-button', bigButton)
window.customElements.define('ribbon-bar', ribbonBar)
window.customElements.define('formula-bar', formulaBar)
window.customElements.define('sheet-grid', sheetGrid)
window.customElements.define('sheet-tabs', sheetTabs)
window.customElements.define('status-bar', statusBar)
window.customElements.define('task-bar', taskBar)
window.customElements.define('mosaic-patch', mosaicPatch)
window.customElements.define('water-mark', waterMark)
window.customElements.define('level-meter', levelMeter)
window.customElements.define('excel-window', excelWindow)
</script>
</body>
</html>
